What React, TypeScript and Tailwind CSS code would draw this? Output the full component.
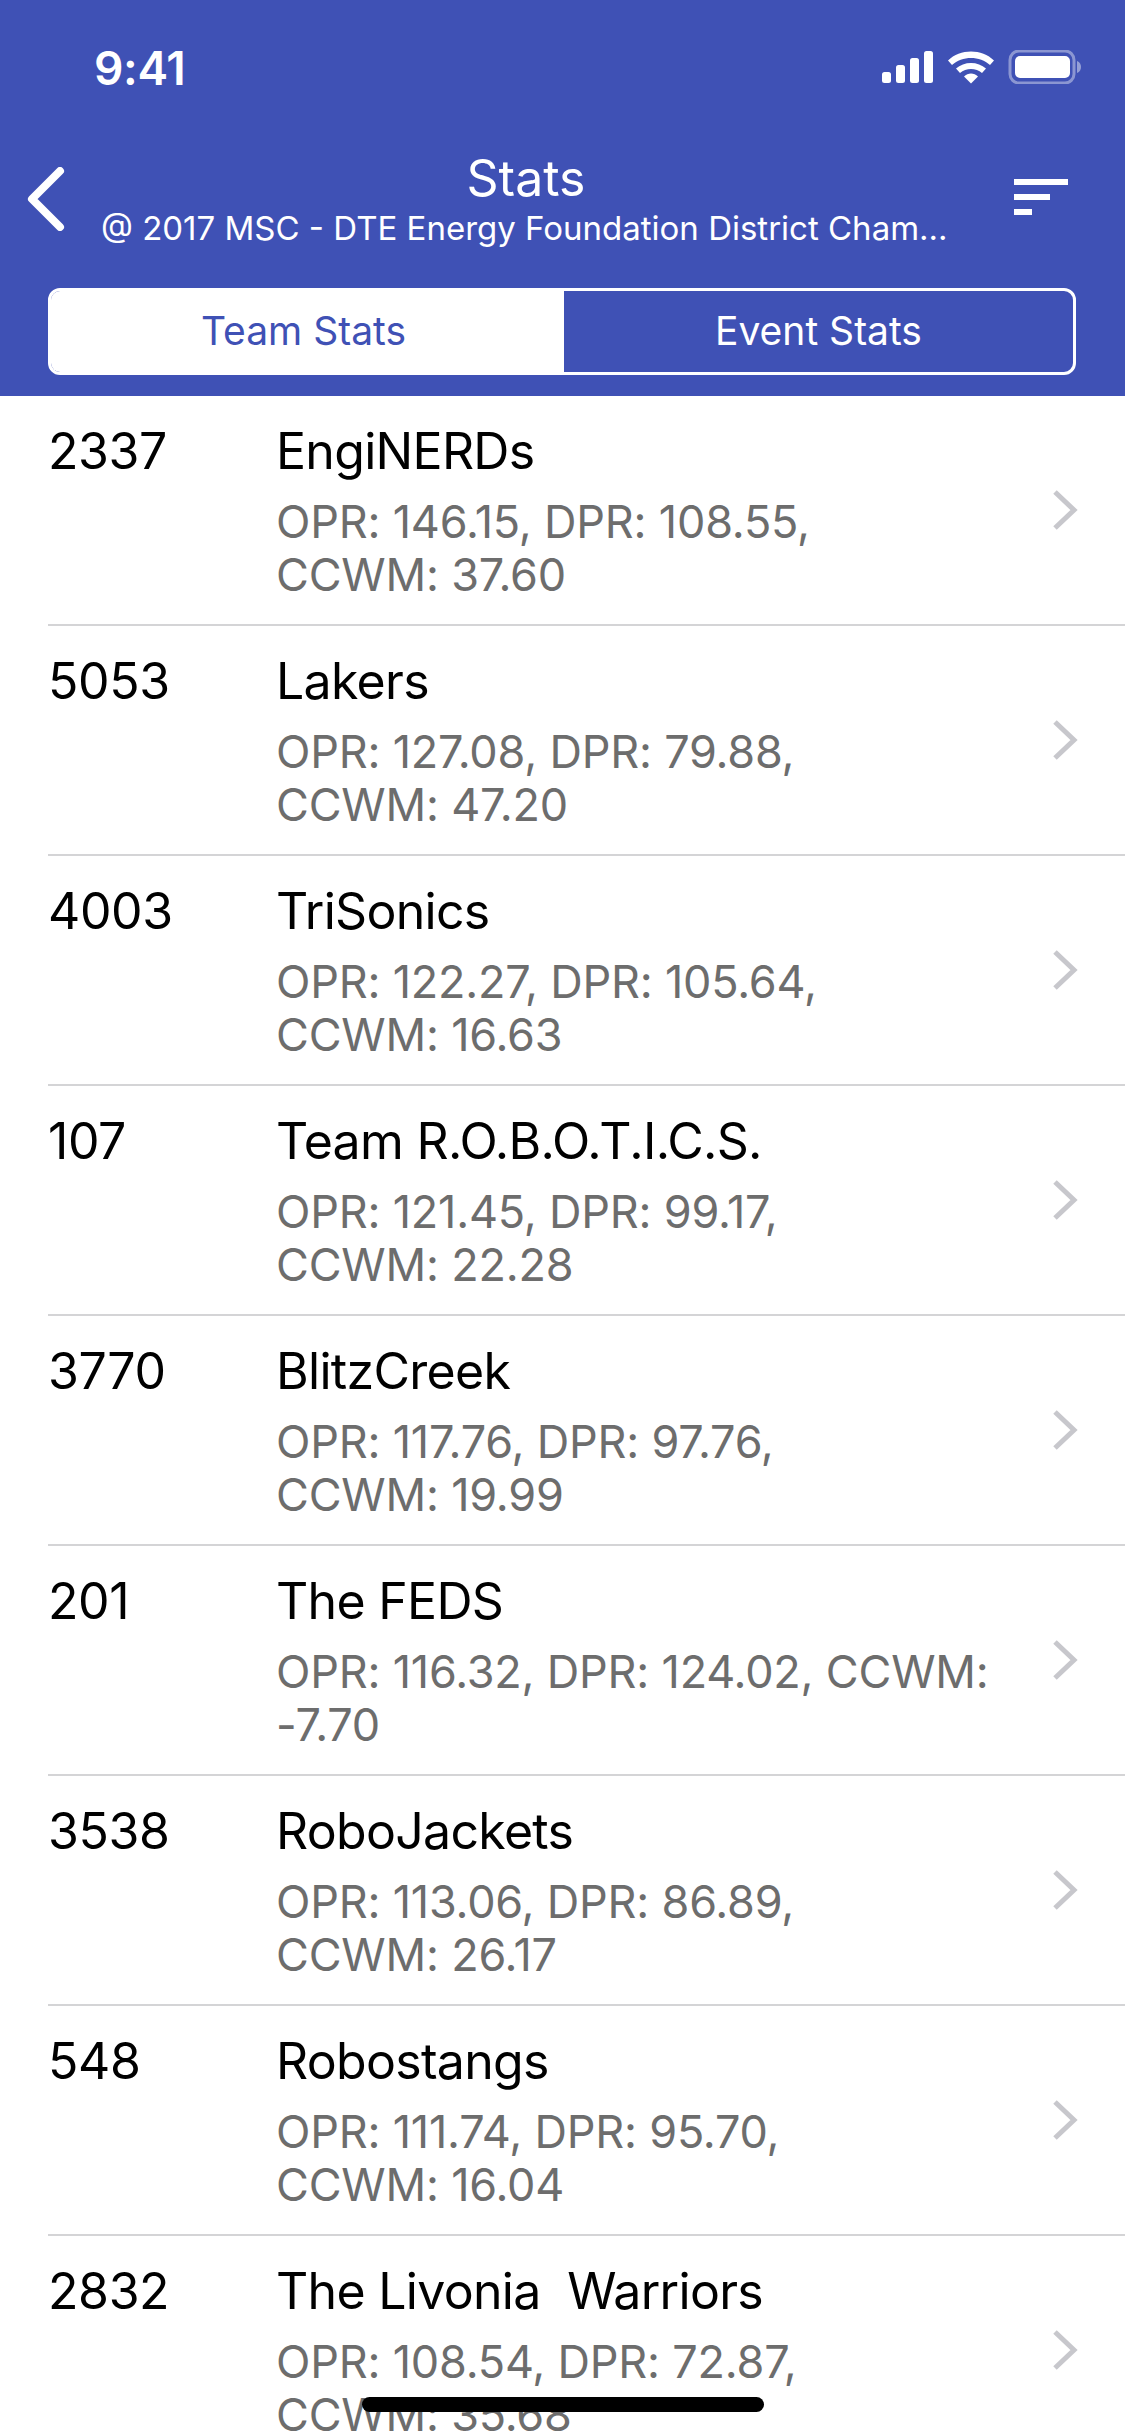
const teams = [
  { number: "2337", name: "EngiNERDs", stats: "OPR: 146.15, DPR: 108.55, CCWM:\u00a037.60" },
  { number: "5053", name: "Lakers", stats: "OPR: 127.08, DPR: 79.88, CCWM:\u00a047.20" },
  { number: "4003", name: "TriSonics", stats: "OPR: 122.27, DPR: 105.64, CCWM:\u00a016.63" },
  { number: "107", name: "Team R.O.B.O.T.I.C.S.", stats: "OPR: 121.45, DPR: 99.17, CCWM:\u00a022.28" },
  { number: "3770", name: "BlitzCreek", stats: "OPR: 117.76, DPR: 97.76, CCWM:\u00a019.99" },
  { number: "201", name: "The FEDS", stats: "OPR: 116.32, DPR: 124.02, CCWM: -7.70" },
  { number: "3538", name: "RoboJackets", stats: "OPR: 113.06, DPR: 86.89, CCWM:\u00a026.17" },
  { number: "548", name: "Robostangs", stats: "OPR: 111.74, DPR: 95.70, CCWM:\u00a016.04" },
  { number: "2832", name: "The Livonia\u00a0 Warriors", stats: "OPR: 108.54, DPR: 72.87, CCWM:\u00a035.68" },
];

function StatusIcons() {
  return (
    <svg width="200" height="34" viewBox="0 0 200 34" fill="white">
      <rect x="0" y="22" width="9" height="11" rx="2.5" />
      <rect x="14" y="15" width="9" height="18" rx="2.5" />
      <rect x="28" y="8" width="9" height="25" rx="2.5" />
      <rect x="42" y="1" width="9" height="32" rx="2.5" />
      <path d="M66 10.5C78 -1.5 100 -1.5 112 10.5L108 15C98 5.5 80 5.5 70 15Z" />
      <path d="M74 18.5C82 11 96 11 104 18.5L100 23C94 17.5 84 17.5 78 23Z" />
      <path d="M82 26.5C86 22.5 92 22.5 96 26.5L89 33.5Z" />
      <rect x="128" y="1" width="64" height="32" rx="9" fill="none" stroke="white" strokeOpacity="0.4" strokeWidth="3" />
      <rect x="133" y="6" width="55" height="22" rx="5" />
      <path d="M195 11C198 12 199 14.5 199 17C199 19.5 198 22 195 23Z" fillOpacity="0.45" />
    </svg>
  );
}

function TeamRow({ number, name, stats }: { number: string; name: string; stats: string }) {
  return (
    <li className="ml-12 flex h-[230px] items-center border-b-2 border-[#d4d4d6]">
      <div className="h-full w-[228px] shrink-0 pt-[26px] text-[50px] leading-[58px] tracking-[-0.4px] text-black">{number}</div>
      <div className="h-full min-w-0 flex-1 pt-[26px]">
        <div className="text-[50px] leading-[58px] tracking-[-0.7px] text-black">{name}</div>
        <div className="mt-[15px] text-[45px] leading-[53px] tracking-[-0.2px] text-[#6d6d6d]">{stats}</div>
      </div>
      <svg width="26" height="42" viewBox="0 0 26 42" fill="none" className="mr-[47px] ml-[60px] shrink-0">
        <path d="M3 3L22 21L3 39" stroke="#c7c7cc" strokeWidth="5" />
      </svg>
    </li>
  );
}

export default function App() {
  return (
    <div className="relative h-[2436px] w-[1125px] overflow-hidden bg-white font-['Inter',sans-serif]">
      <header className="flex h-[396px] flex-col bg-[#3f51b5] text-white">
        <div className="flex h-[132px] items-start justify-between pt-[50px] pr-[43px] pl-[94px]">
          <span className="text-[46px] leading-[36px] font-semibold tracking-[-0.3px]">9:41</span>
          <StatusIcons />
        </div>
        <div className="flex h-[106px] items-start">
          <div className="w-[101px] shrink-0 pt-[35px] pl-[27px]">
            <svg width="38" height="64" viewBox="0 0 38 64" fill="none">
              <path d="M33 4L5 32L33 60" stroke="white" strokeWidth="8" strokeLinecap="round" strokeLinejoin="round" />
            </svg>
          </div>
          <div className="w-[850px] min-w-0 pt-4 text-center">
            <div className="text-[50px] leading-[60px]">Stats</div>
            <div className="truncate text-[33px] leading-[40px]">@ 2017 MSC - DTE Energy Foundation District Championship</div>
          </div>
          <div className="ml-[63px] flex flex-col gap-[9px] pt-[47px]">
            <span className="h-[6px] w-[54px] bg-white" />
            <span className="h-[6px] w-[36px] bg-white" />
            <span className="h-[6px] w-[18px] bg-white" />
          </div>
        </div>
        <div className="mx-12 mt-[50px] flex h-[87px] w-[1028px] overflow-hidden rounded-xl border-[3px] border-white text-[39px]">
          <div className="flex w-[513px] items-center justify-center bg-white pr-2 text-[#3f51b5]">Team Stats</div>
          <div className="flex flex-1 items-center justify-center">Event Stats</div>
        </div>
      </header>
      <ul>
        {teams.map((team) => (
          <TeamRow key={team.number} {...team} />
        ))}
      </ul>
      <div className="absolute bottom-[24px] left-[362px] h-[15px] w-[402px] rounded-full bg-black" />
    </div>
  );
}
